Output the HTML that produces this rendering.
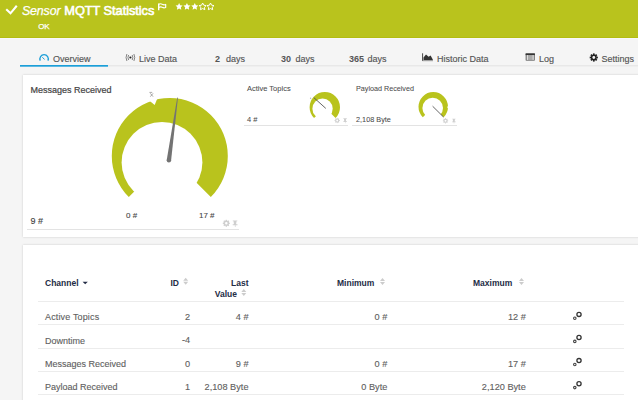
<!DOCTYPE html>
<html><head><meta charset="utf-8"><style>
html,body{margin:0;padding:0;}
body{width:638px;height:400px;overflow:hidden;position:relative;background:#f5f5f5;font-family:"Liberation Sans", sans-serif;}
.t{position:absolute;white-space:nowrap;font-family:"Liberation Sans", sans-serif;}
svg{position:absolute;left:0;top:0;}
</style></head><body>
<div style="position:absolute;left:0px;top:0px;width:638px;height:38px;background:#b9c31d;"></div>
<div style="position:absolute;left:0px;top:37px;width:638px;height:1px;background:#b3bc12;"></div>
<div style="position:absolute;left:0px;top:38px;width:638px;height:1px;background:#f8f8fb;"></div>
<div class="t" style="left:22px;top:5.10px;font-size:12.4px;line-height:12.4px;font-weight:400;color:#fff;font-style:italic;-webkit-text-stroke:0.25px #fff;letter-spacing:-0.15px;">Sensor</div>
<div class="t" style="left:64.3px;top:4.96px;font-size:12.8px;line-height:12.8px;font-weight:400;color:#fff;font-style:normal;-webkit-text-stroke:0.6px #fff;letter-spacing:-0.05px;">MQTT Statistics</div>
<div class="t" style="left:38.3px;top:23.23px;font-size:8.0px;line-height:8.0px;font-weight:400;color:#fff;font-style:normal;-webkit-text-stroke:0.25px #fff;letter-spacing:-0.2px;">OK</div>
<div style="position:absolute;left:20px;top:65px;width:618px;height:1px;background:#e8e8e8;"></div>
<div style="position:absolute;left:20px;top:66px;width:618px;height:1px;background:#efefef;"></div>
<div style="position:absolute;left:20px;top:65px;width:87.5px;height:1px;background:#1c9fd8;"></div>
<div style="position:absolute;left:20px;top:66px;width:87.5px;height:1px;background:#5db9e2;"></div>
<div class="t" style="left:53px;top:55.38px;font-size:9px;line-height:9px;font-weight:400;color:#555;font-style:normal;-webkit-text-stroke:0.15px #555;">Overview</div>
<div class="t" style="left:139px;top:55.38px;font-size:9px;line-height:9px;font-weight:400;color:#555;font-style:normal;-webkit-text-stroke:0.15px #555;">Live Data</div>
<div class="t" style="left:215px;top:55.38px;font-size:9px;line-height:9px;font-weight:700;color:#555;font-style:normal;">2</div>
<div class="t" style="left:226px;top:55.38px;font-size:9px;line-height:9px;font-weight:400;color:#555;font-style:normal;-webkit-text-stroke:0.15px #555;">days</div>
<div class="t" style="left:281px;top:55.38px;font-size:9px;line-height:9px;font-weight:700;color:#555;font-style:normal;">30</div>
<div class="t" style="left:295.5px;top:55.38px;font-size:9px;line-height:9px;font-weight:400;color:#555;font-style:normal;-webkit-text-stroke:0.15px #555;">days</div>
<div class="t" style="left:349px;top:55.38px;font-size:9px;line-height:9px;font-weight:700;color:#555;font-style:normal;">365</div>
<div class="t" style="left:367.5px;top:55.38px;font-size:9px;line-height:9px;font-weight:400;color:#555;font-style:normal;-webkit-text-stroke:0.15px #555;">days</div>
<div class="t" style="left:437px;top:55.38px;font-size:9px;line-height:9px;font-weight:400;color:#555;font-style:normal;-webkit-text-stroke:0.15px #555;">Historic Data</div>
<div class="t" style="left:539px;top:55.38px;font-size:9px;line-height:9px;font-weight:400;color:#555;font-style:normal;-webkit-text-stroke:0.15px #555;">Log</div>
<div class="t" style="left:601.5px;top:55.38px;font-size:9px;line-height:9px;font-weight:400;color:#555;font-style:normal;-webkit-text-stroke:0.15px #555;">Settings</div>
<div style="position:absolute;left:23px;top:75px;width:640px;height:162px;background:#fff;box-shadow:0 0 2px rgba(0,0,0,0.18);"></div>
<div style="position:absolute;left:23px;top:245px;width:640px;height:200px;background:#fff;box-shadow:0 0 2px rgba(0,0,0,0.18);"></div>
<div class="t" style="left:30.5px;top:85.78px;font-size:9px;line-height:9px;font-weight:400;color:#444;font-style:normal;-webkit-text-stroke:0.2px #444;">Messages Received</div>
<div class="t" style="left:30.5px;top:216.98px;font-size:9px;line-height:9px;font-weight:400;color:#444;font-style:normal;-webkit-text-stroke:0.15px #444;">9 #</div>
<div style="position:absolute;left:27px;top:229px;width:212px;height:1px;background:#e3e3e3;"></div>
<div class="t" style="left:126px;top:211.93px;font-size:8px;line-height:8px;font-weight:400;color:#444;font-style:normal;-webkit-text-stroke:0.1px #444;">0 #</div>
<div class="t" style="left:199px;top:211.93px;font-size:8px;line-height:8px;font-weight:400;color:#444;font-style:normal;-webkit-text-stroke:0.1px #444;">17 #</div>
<div class="t" style="left:247px;top:84.95px;font-size:7.5px;line-height:7.5px;font-weight:400;color:#4a4a4a;font-style:normal;-webkit-text-stroke:0.05px #4a4a4a;">Active Topics</div>
<div class="t" style="left:247px;top:115.65px;font-size:7.5px;line-height:7.5px;font-weight:400;color:#4a4a4a;font-style:normal;-webkit-text-stroke:0.05px #4a4a4a;">4 #</div>
<div style="position:absolute;left:244px;top:125px;width:104px;height:1px;background:#e3e3e3;"></div>
<div class="t" style="left:356px;top:85.41px;font-size:7.2px;line-height:7.2px;font-weight:400;color:#4a4a4a;font-style:normal;-webkit-text-stroke:0.05px #4a4a4a;">Payload Received</div>
<div class="t" style="left:356px;top:115.82px;font-size:7.3px;line-height:7.3px;font-weight:400;color:#4a4a4a;font-style:normal;-webkit-text-stroke:0.05px #4a4a4a;">2,108 Byte</div>
<div style="position:absolute;left:352px;top:125px;width:105px;height:1px;background:#e3e3e3;"></div>
<div class="t" style="left:45px;top:279.10px;font-size:8.5px;line-height:8.5px;font-weight:700;color:#232c45;font-style:normal;">Channel</div>
<div class="t" style="left:170.5px;top:279.10px;font-size:8.5px;line-height:8.5px;font-weight:700;color:#232c45;font-style:normal;">ID</div>
<div class="t" style="left:-51.5px;width:300px;text-align:right;top:279.10px;font-size:8.5px;line-height:8.5px;font-weight:700;color:#232c45;font-style:normal;">Last</div>
<div class="t" style="left:-63px;width:300px;text-align:right;top:290.00px;font-size:8.5px;line-height:8.5px;font-weight:700;color:#232c45;font-style:normal;">Value</div>
<div class="t" style="left:337px;top:279.10px;font-size:8.5px;line-height:8.5px;font-weight:700;color:#232c45;font-style:normal;">Minimum</div>
<div class="t" style="left:473px;top:279.10px;font-size:8.5px;line-height:8.5px;font-weight:700;color:#232c45;font-style:normal;">Maximum</div>
<div style="position:absolute;left:38px;top:301px;width:586px;height:1px;background:#ececec;"></div>
<div style="position:absolute;left:38px;top:324px;width:586px;height:1px;background:#ececec;"></div>
<div style="position:absolute;left:38px;top:348px;width:586px;height:1px;background:#ececec;"></div>
<div style="position:absolute;left:38px;top:371px;width:586px;height:1px;background:#ececec;"></div>
<div style="position:absolute;left:38px;top:394px;width:586px;height:1px;background:#ececec;"></div>
<div class="t" style="left:45px;top:313.48px;font-size:9px;line-height:9px;font-weight:400;color:#606060;font-style:normal;-webkit-text-stroke:0.12px #606060;letter-spacing:0.15px;">Active Topics</div>
<div class="t" style="left:-109.80000000000001px;width:300px;text-align:right;top:313.31px;font-size:9.2px;line-height:9.2px;font-weight:400;color:#606060;font-style:normal;-webkit-text-stroke:0.12px #606060;">2</div>
<div class="t" style="left:-51.5px;width:300px;text-align:right;top:313.31px;font-size:9.2px;line-height:9.2px;font-weight:400;color:#606060;font-style:normal;-webkit-text-stroke:0.12px #606060;">4 #</div>
<div class="t" style="left:87.30000000000001px;width:300px;text-align:right;top:313.31px;font-size:9.2px;line-height:9.2px;font-weight:400;color:#606060;font-style:normal;-webkit-text-stroke:0.12px #606060;">0 #</div>
<div class="t" style="left:225.79999999999995px;width:300px;text-align:right;top:313.31px;font-size:9.2px;line-height:9.2px;font-weight:400;color:#606060;font-style:normal;-webkit-text-stroke:0.12px #606060;">12 #</div>
<div class="t" style="left:45px;top:336.58px;font-size:9px;line-height:9px;font-weight:400;color:#606060;font-style:normal;-webkit-text-stroke:0.12px #606060;">Downtime</div>
<div class="t" style="left:-109.80000000000001px;width:300px;text-align:right;top:336.41px;font-size:9.2px;line-height:9.2px;font-weight:400;color:#606060;font-style:normal;-webkit-text-stroke:0.12px #606060;">-4</div>
<div class="t" style="left:45px;top:359.68px;font-size:9px;line-height:9px;font-weight:400;color:#606060;font-style:normal;-webkit-text-stroke:0.12px #606060;">Messages Received</div>
<div class="t" style="left:-109.80000000000001px;width:300px;text-align:right;top:359.51px;font-size:9.2px;line-height:9.2px;font-weight:400;color:#606060;font-style:normal;-webkit-text-stroke:0.12px #606060;">0</div>
<div class="t" style="left:-51.5px;width:300px;text-align:right;top:359.51px;font-size:9.2px;line-height:9.2px;font-weight:400;color:#606060;font-style:normal;-webkit-text-stroke:0.12px #606060;">9 #</div>
<div class="t" style="left:87.30000000000001px;width:300px;text-align:right;top:359.51px;font-size:9.2px;line-height:9.2px;font-weight:400;color:#606060;font-style:normal;-webkit-text-stroke:0.12px #606060;">0 #</div>
<div class="t" style="left:225.79999999999995px;width:300px;text-align:right;top:359.51px;font-size:9.2px;line-height:9.2px;font-weight:400;color:#606060;font-style:normal;-webkit-text-stroke:0.12px #606060;">17 #</div>
<div class="t" style="left:45px;top:382.78px;font-size:9px;line-height:9px;font-weight:400;color:#606060;font-style:normal;-webkit-text-stroke:0.12px #606060;">Payload Received</div>
<div class="t" style="left:-109.80000000000001px;width:300px;text-align:right;top:382.61px;font-size:9.2px;line-height:9.2px;font-weight:400;color:#606060;font-style:normal;-webkit-text-stroke:0.12px #606060;">1</div>
<div class="t" style="left:-51.5px;width:300px;text-align:right;top:382.61px;font-size:9.2px;line-height:9.2px;font-weight:400;color:#606060;font-style:normal;-webkit-text-stroke:0.12px #606060;">2,108 Byte</div>
<div class="t" style="left:87.30000000000001px;width:300px;text-align:right;top:382.61px;font-size:9.2px;line-height:9.2px;font-weight:400;color:#606060;font-style:normal;-webkit-text-stroke:0.12px #606060;">0 Byte</div>
<div class="t" style="left:225.79999999999995px;width:300px;text-align:right;top:382.61px;font-size:9.2px;line-height:9.2px;font-weight:400;color:#606060;font-style:normal;-webkit-text-stroke:0.12px #606060;">2,120 Byte</div>
<svg width="638" height="400" viewBox="0 0 638 400">
<path d="M7 9.9 L10.5 13.3 L16.1 6.6" fill="none" stroke="#fff" stroke-width="2.1" stroke-linecap="square"/>
<path d="M158.7 10.2 V3.6" fill="none" stroke="#fff" stroke-width="1.4"/><path d="M158.8 4.2 Q160.6 3.3 162.2 4.3 Q164 5.3 165.7 4.4 V7.4 Q164 8.3 162.2 7.3 Q160.6 6.3 158.8 7.4" fill="none" stroke="#fff" stroke-width="1.15" stroke-linejoin="round"/>
<polygon points="179.10,3.00 180.19,5.20 182.62,5.56 180.86,7.27 181.27,9.69 179.10,8.55 176.93,9.69 177.34,7.27 175.58,5.56 178.01,5.20" fill="#fff"/>
<polygon points="186.95,3.00 188.04,5.20 190.47,5.56 188.71,7.27 189.12,9.69 186.95,8.55 184.78,9.69 185.19,7.27 183.43,5.56 185.86,5.20" fill="#fff"/>
<polygon points="194.80,3.00 195.89,5.20 198.32,5.56 196.56,7.27 196.97,9.69 194.80,8.55 192.63,9.69 193.04,7.27 191.28,5.56 193.71,5.20" fill="#fff"/>
<polygon points="202.65,3.00 203.74,5.20 206.17,5.56 204.41,7.27 204.82,9.69 202.65,8.55 200.48,9.69 200.89,7.27 199.13,5.56 201.56,5.20" fill="none" stroke="#fff" stroke-width="1"/>
<polygon points="210.50,3.00 211.59,5.20 214.02,5.56 212.26,7.27 212.67,9.69 210.50,8.55 208.33,9.69 208.74,7.27 206.98,5.56 209.41,5.20" fill="none" stroke="#fff" stroke-width="1"/>
<path d="M40.3 60.6 A4.2 4.2 0 1 1 47.9 60.6" fill="none" stroke="#1c9fd8" stroke-width="1.3"/>
<path d="M42.3 57.3 L44.6 59.4" stroke="#1c9fd8" stroke-width="1"/>
<circle cx="130.4" cy="57.5" r="1.1" fill="#222"/>
<path d="M128.6 55 Q127.3 57.5 128.6 60 M132.2 55 Q133.5 57.5 132.2 60 M126.9 54 Q125.2 57.5 126.9 61 M133.9 54 Q135.6 57.5 133.9 61" fill="none" stroke="#777" stroke-width="0.9"/>
<rect x="422" y="53.3" width="1.1" height="7.7" fill="#555"/><path d="M423.5 60.3 V57.5 L426 54.6 L428.6 56.8 L430.6 55.6 L432.8 59.6 V60.3 Z" fill="#333"/><rect x="422.5" y="60.2" width="10.5" height="1" fill="#999"/>
<rect x="525.6" y="53.4" width="9.3" height="7.4" fill="#777" rx="0.7"/><rect x="525.6" y="53.4" width="9.3" height="1.7" fill="#333"/><rect x="526.6" y="55.1" width="7.3" height="4.8" fill="#aaa"/><rect x="527" y="55.1" width="1" height="4.8" fill="#ddd"/><rect x="532.6" y="55.1" width="1" height="4.8" fill="#ddd"/>
<g transform="translate(593.8,57.5)"><circle r="2.9" fill="#222"/><circle r="1.4" fill="#f5f5f5"/><rect x="-0.85" y="-4.1" width="1.7" height="1.7" fill="#222" transform="rotate(0)"/><rect x="-0.85" y="-4.1" width="1.7" height="1.7" fill="#222" transform="rotate(45)"/><rect x="-0.85" y="-4.1" width="1.7" height="1.7" fill="#222" transform="rotate(90)"/><rect x="-0.85" y="-4.1" width="1.7" height="1.7" fill="#222" transform="rotate(135)"/><rect x="-0.85" y="-4.1" width="1.7" height="1.7" fill="#222" transform="rotate(180)"/><rect x="-0.85" y="-4.1" width="1.7" height="1.7" fill="#222" transform="rotate(225)"/><rect x="-0.85" y="-4.1" width="1.7" height="1.7" fill="#222" transform="rotate(270)"/><rect x="-0.85" y="-4.1" width="1.7" height="1.7" fill="#222" transform="rotate(315)"/></g>
<path d="M169.80 156.00 L128.79 197.01 A58 58 0 1 1 210.81 197.01 Z" fill="#b9c31d"/>
<circle cx="162" cy="162.4" r="40.4" fill="#fff"/>
<path d="M149.5 100.8 L154.7 104.9 L157.3 98.6 L157.3 96 L149.5 96 Z" fill="#fff"/>
<path d="M171.08 160.60 L177.95 97.65 L177.25 97.55 L166.72 160.00 Z" fill="#737373"/><circle cx="168.9" cy="160.3" r="2.2" fill="#737373"/>
<path d="M150.3 93.3 L153.1 96.7 M153.1 93.3 L150.3 96.7 M149.4 92.4 H152.2" stroke="#808080" stroke-width="0.65"/>
<g transform="translate(226.3,223.3) scale(1.0)"><circle r="2.0" fill="none" stroke="#cfcfcf" stroke-width="1.5"/><rect x="-0.65" y="-3.5" width="1.3" height="1.3" fill="#cfcfcf" transform="rotate(0)"/><rect x="-0.65" y="-3.5" width="1.3" height="1.3" fill="#cfcfcf" transform="rotate(45)"/><rect x="-0.65" y="-3.5" width="1.3" height="1.3" fill="#cfcfcf" transform="rotate(90)"/><rect x="-0.65" y="-3.5" width="1.3" height="1.3" fill="#cfcfcf" transform="rotate(135)"/><rect x="-0.65" y="-3.5" width="1.3" height="1.3" fill="#cfcfcf" transform="rotate(180)"/><rect x="-0.65" y="-3.5" width="1.3" height="1.3" fill="#cfcfcf" transform="rotate(225)"/><rect x="-0.65" y="-3.5" width="1.3" height="1.3" fill="#cfcfcf" transform="rotate(270)"/><rect x="-0.65" y="-3.5" width="1.3" height="1.3" fill="#cfcfcf" transform="rotate(315)"/></g>
<g transform="translate(232.8,223.3) scale(1.0)"><path d="M0 -2.9 H4.5 V-2 H3.7 L3.3 1 H4.7 V1.9 H-0.1 V1 H1.1 L0.8 -2 H0 Z M2.1 1.9 H2.7 V3.6 H2.1 Z" fill="#cfcfcf"/></g>
<path d="M324.80 107.20 L314.05 117.95 A15.2 15.2 0 1 1 335.55 117.95 Z" fill="#b9c31d"/>
<circle cx="322.55" cy="108.65" r="10.15" fill="#fff"/>
<path d="M313.8 97.6 L325.8 108.4" stroke="#555" stroke-width="0.9"/><circle cx="310.6" cy="98.3" r="0.7" fill="#bbb"/>
<g transform="translate(337.2,120.5) scale(0.75)"><circle r="2.0" fill="none" stroke="#cfcfcf" stroke-width="1.5"/><rect x="-0.65" y="-3.5" width="1.3" height="1.3" fill="#cfcfcf" transform="rotate(0)"/><rect x="-0.65" y="-3.5" width="1.3" height="1.3" fill="#cfcfcf" transform="rotate(45)"/><rect x="-0.65" y="-3.5" width="1.3" height="1.3" fill="#cfcfcf" transform="rotate(90)"/><rect x="-0.65" y="-3.5" width="1.3" height="1.3" fill="#cfcfcf" transform="rotate(135)"/><rect x="-0.65" y="-3.5" width="1.3" height="1.3" fill="#cfcfcf" transform="rotate(180)"/><rect x="-0.65" y="-3.5" width="1.3" height="1.3" fill="#cfcfcf" transform="rotate(225)"/><rect x="-0.65" y="-3.5" width="1.3" height="1.3" fill="#cfcfcf" transform="rotate(270)"/><rect x="-0.65" y="-3.5" width="1.3" height="1.3" fill="#cfcfcf" transform="rotate(315)"/></g>
<g transform="translate(343.4,120.5) scale(0.75)"><path d="M0 -2.9 H4.5 V-2 H3.7 L3.3 1 H4.7 V1.9 H-0.1 V1 H1.1 L0.8 -2 H0 Z M2.1 1.9 H2.7 V3.6 H2.1 Z" fill="#cfcfcf"/></g>
<path d="M433.25 106.85 L422.82 117.28 A14.75 14.75 0 1 1 443.68 117.28 Z" fill="#b9c31d"/>
<circle cx="432.7" cy="108" r="10.3" fill="#fff"/>
<path d="M432.6 106.2 L443.5 117" stroke="#555" stroke-width="0.9"/>
<path d="M447 107 L450 107.5" stroke="#fff" stroke-width="1"/>
<g transform="translate(445.5,120.8) scale(0.75)"><circle r="2.0" fill="none" stroke="#cfcfcf" stroke-width="1.5"/><rect x="-0.65" y="-3.5" width="1.3" height="1.3" fill="#cfcfcf" transform="rotate(0)"/><rect x="-0.65" y="-3.5" width="1.3" height="1.3" fill="#cfcfcf" transform="rotate(45)"/><rect x="-0.65" y="-3.5" width="1.3" height="1.3" fill="#cfcfcf" transform="rotate(90)"/><rect x="-0.65" y="-3.5" width="1.3" height="1.3" fill="#cfcfcf" transform="rotate(135)"/><rect x="-0.65" y="-3.5" width="1.3" height="1.3" fill="#cfcfcf" transform="rotate(180)"/><rect x="-0.65" y="-3.5" width="1.3" height="1.3" fill="#cfcfcf" transform="rotate(225)"/><rect x="-0.65" y="-3.5" width="1.3" height="1.3" fill="#cfcfcf" transform="rotate(270)"/><rect x="-0.65" y="-3.5" width="1.3" height="1.3" fill="#cfcfcf" transform="rotate(315)"/></g>
<g transform="translate(452.2,120.8) scale(0.75)"><path d="M0 -2.9 H4.5 V-2 H3.7 L3.3 1 H4.7 V1.9 H-0.1 V1 H1.1 L0.8 -2 H0 Z M2.1 1.9 H2.7 V3.6 H2.1 Z" fill="#cfcfcf"/></g>
<path d="M82.6 281.8 H87.8 L85.2 284.3 Z" fill="#232c45"/>
<path d="M183.2 280.8 L185.7 277.8 L188.2 280.8 Z M183.2 281.8 L185.7 284.8 L188.2 281.8 Z" fill="#ccc"/>
<path d="M241.3 292 L243.8 289 L246.3 292 Z M241.3 293 L243.8 296 L246.3 293 Z" fill="#ccc"/>
<path d="M380 281 L382.5 278 L385 281 Z M380 282 L382.5 285 L385 282 Z" fill="#ccc"/>
<path d="M519 281 L521.5 278 L524 281 Z M519 282 L521.5 285 L524 282 Z" fill="#ccc"/>
<circle cx="579" cy="314.4" r="2.1" fill="none" stroke="#333" stroke-width="1.3"/><circle cx="574.8" cy="318.3" r="1.25" fill="none" stroke="#444" stroke-width="1.1"/>
<circle cx="579" cy="337.5" r="2.1" fill="none" stroke="#333" stroke-width="1.3"/><circle cx="574.8" cy="341.4" r="1.25" fill="none" stroke="#444" stroke-width="1.1"/>
<circle cx="579" cy="360.6" r="2.1" fill="none" stroke="#333" stroke-width="1.3"/><circle cx="574.8" cy="364.5" r="1.25" fill="none" stroke="#444" stroke-width="1.1"/>
<circle cx="579" cy="383.7" r="2.1" fill="none" stroke="#333" stroke-width="1.3"/><circle cx="574.8" cy="387.6" r="1.25" fill="none" stroke="#444" stroke-width="1.1"/>
</svg>
</body></html>
